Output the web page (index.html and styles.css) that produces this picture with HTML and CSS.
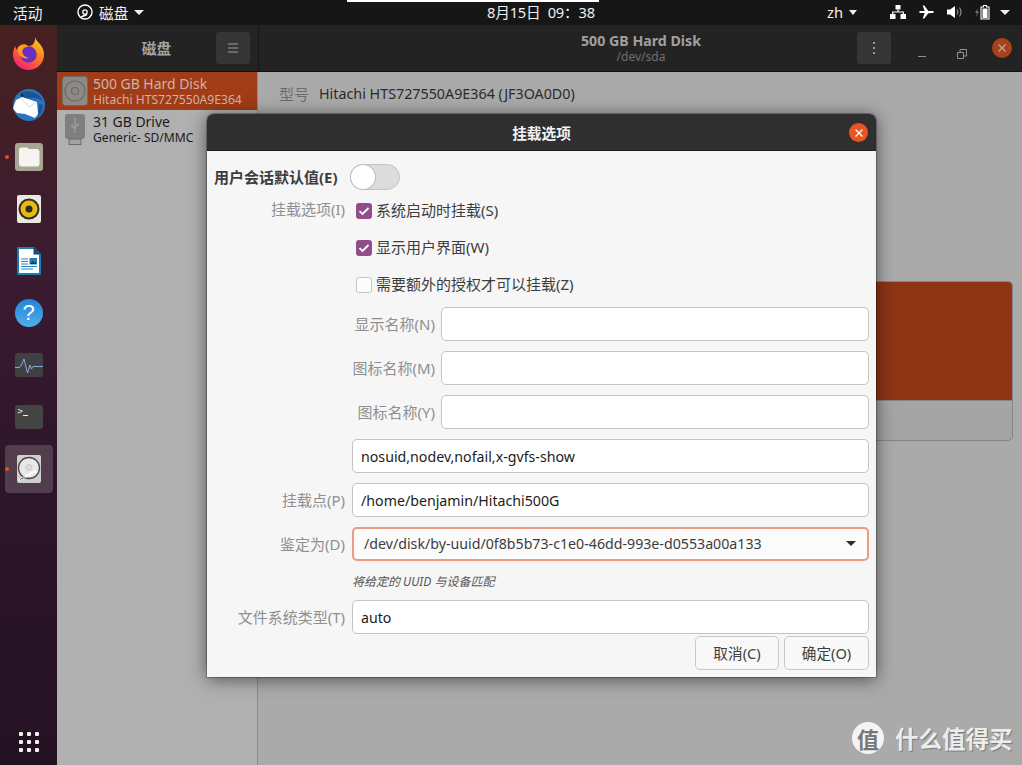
FILE: index.html
```html
<!DOCTYPE html>
<html lang="zh">
<head>
<meta charset="utf-8">
<title>磁盘</title>
<link rel="stylesheet" href="styles.css">
</head>
<body>
<div class="screen">
  <header class="topbar">
    <span class="activities">活动</span>
    <span class="appmenu">
      <svg class="appicon" viewBox="0 0 16 16" width="16" height="16"><circle cx="8" cy="8" r="7" fill="none" stroke="#fff" stroke-width="1.4"/><circle cx="8" cy="8" r="2.2" fill="none" stroke="#fff" stroke-width="1.3"/><path d="M4 13l6-2.5" stroke="#fff" stroke-width="1.4"/></svg>
      <span>磁盘</span>
      <i class="caret"></i>
    </span>
    <span class="clock">8月15日&nbsp;&nbsp;09：38</span>
    <span class="lang">zh<i class="caret small"></i></span>
    <span class="tray">
      <svg viewBox="0 0 16 14" width="16" height="14"><path d="M5.500 0h5v4.500h-5zM0 9h5.500v5H0zM10.500 9H16v5h-5.500z" fill="#fff"/><path d="M8 4.500v2.500M2.700 9V7h10.600v2" fill="none" stroke="#fff" stroke-width="1.200"/></svg>
      <svg viewBox="0 0 16 14" width="15" height="14"><path d="M0 7l1-1.100 5 .1L4 0h1.600L10 5.800l4 .1c1 0 1.800.5 1.800 1.100s-.8 1.100-1.800 1.100l-4 .1L5.600 14H4l2-6-5 .1z" fill="#fff"/></svg>
      <svg viewBox="0 0 15 14" width="15" height="14"><path d="M0 4.500h3L8 1v12L3 9.500H0z" fill="#fff"/><path d="M10 4.500c1 1.500 1 3.500 0 5M12.500 2.500c1.800 2.700 1.800 6.300 0 9" fill="none" stroke="#8d8d8d" stroke-width="1.200"/></svg>
      <svg viewBox="0 0 15 16" width="15" height="16"><path d="M3 4L0 9h2l-1 4 3-5.500H2z" fill="#777"/><path d="M8.500 1.500h3v1.500h2.500v12H6V3h2.500z" fill="none" stroke="#fff" stroke-width="1.100"/><rect x="7.500" y="4.500" width="5" height="9.500" fill="#fff"/></svg>
      <i class="caret"></i>
    </span>
  </header>

  <div class="desktop">
    <nav class="dock">
      <div class="dock-item">
        <svg viewBox="0 0 32 34" width="31" height="33"><defs><linearGradient id="ffa" x1="0.800" y1="0" x2="0.200" y2="1"><stop offset="0" stop-color="#ffd21f"/><stop offset=".45" stop-color="#ff7a1f"/><stop offset="1" stop-color="#f5187c"/></linearGradient></defs><path d="M23 0c.5 3 2 4 4.500 7 3 3.500 4.500 7 4.500 11 0 9-7 16-16 16S0 27 0 18c0-3.500 1-6.500 2.500-9 0 2 .5 3 1.500 4C5 9.500 8 7.500 11 7.500c1.500 0 3 .5 4 1.500 5 1 8-3 8-9z" fill="url(#ffa)"/><circle cx="16" cy="18" r="8.500" fill="#6b2fc0"/><path d="M5 11c3-3 8-3 11-1-4 0-6 2-6.500 5 .5 4 3.500 6.500 7.500 6.500-5 2-11-1-12-6.500z" fill="#ff9a1f"/></svg>
      </div>
      <div class="dock-item">
        <svg viewBox="0 0 32 32" width="32" height="32"><circle cx="16" cy="16" r="16" fill="#2a75c0"/><path d="M7 4c8-4 19-1 23 8-5-3-10-4-14-3-4 1-8 1-9-5z" fill="#1b558f"/><path d="M22 30c5-3 8-8 8-14l-4-1-1 14z" fill="#1a5590"/><path d="M0 19l3-8 6-3 15 5 1 12-3 4-10-4-8-1-3-3z" fill="#fff"/><path d="M8 9l8 9 8-5" fill="none" stroke="#cfd6df" stroke-width="1"/><circle cx="9" cy="6.500" r="1.300" fill="#10243f"/></svg>
      </div>
      <div class="dock-item">
        <i class="run-dot"></i>
        <svg viewBox="0 0 28 28" width="28" height="28"><rect width="28" height="28" rx="3" fill="#a9a595"/><path d="M4 7c0-1.500 1-2.500 2.500-2.500h5c1 0 1.500.5 2.200 1.500h8c1.500 0 2.800 1 2.800 2.500V21c0 1.500-1 2.500-2.500 2.500h-15C5 23.500 4 22.500 4 21z" fill="#f6f4f1"/></svg>
      </div>
      <div class="dock-item">
        <svg viewBox="0 0 24 28" width="24" height="28"><rect width="24" height="28" rx="2" fill="#ebe8dd"/><circle cx="12" cy="14" r="10.500" fill="#2f2d29"/><circle cx="12" cy="14" r="8.500" fill="#eab90f"/><circle cx="12" cy="14" r="3.500" fill="#2b2a25"/></svg>
      </div>
      <div class="dock-item">
        <svg viewBox="0 0 24 28" width="24" height="28"><path d="M1 0h16l7 7v20a1 1 0 0 1-1 1H1a1 1 0 0 1-1-1V1a1 1 0 0 1 1-1z" fill="#1a7fae"/><path d="M2 2h14.500L22 7.500V26H2z" fill="#fff"/><path d="M16.500 0L24 7.500h-7.500z" fill="#0e4f70"/><path d="M4 12h7M4 14.500h7M4 17h7M4 19.500h16M4 22h12" stroke="#1f86c6" stroke-width="1.200"/><rect x="12.500" y="11" width="7.500" height="6.500" fill="#2a7ab0"/><path d="M13 17l2.500-3 2 2 1-1 1 2z" fill="#1c3b56"/></svg>
      </div>
      <div class="dock-item">
        <div class="help">?</div>
      </div>
      <div class="dock-item">
        <svg viewBox="0 0 28 24" width="28" height="24"><rect width="28" height="24" rx="3" fill="#3f4042"/><path d="M0 14.500h4l2-1.500 3-7 3.500 14 2.500-8 1.500 4 1.500-2.500h10" fill="none" stroke="#8fa6e0" stroke-width="1"/></svg>
      </div>
      <div class="dock-item">
        <div class="term"><span>&gt;</span><b></b></div>
      </div>
      <div class="dock-item active">
        <i class="run-dot"></i>
        <svg viewBox="0 0 24 28" width="24" height="28"><rect width="24" height="28" rx="2" fill="#cfcfcf"/><circle cx="12" cy="13" r="10.500" fill="#e8e8e8" stroke="#4a4a4a" stroke-width="1.300"/><circle cx="12" cy="12.500" r="3.500" fill="#d2d2d2"/><circle cx="12" cy="12.500" r="1" fill="#f2f2f2"/><path d="M2 25l17-9" stroke="#fff" stroke-width="2"/><path d="M3 24.500l5-2.500" stroke="#555" stroke-width="1"/></svg>
      </div>
      <div class="apps-grid">
        <i></i><i></i><i></i><i></i><i></i><i></i><i></i><i></i><i></i>
      </div>
    </nav>

    <div class="window">
      <div class="headerbar">
        <div class="hb-side">
          <span class="hb-title">磁盘</span>
          <span class="hb-btn">
            <svg viewBox="0 0 12 10" width="12" height="10"><path d="M1 1h10M1 5h10M1 9h10" stroke="#a0a0a0" stroke-width="1"/></svg>
          </span>
        </div>
        <div class="hb-main">
          <div class="hb-center">
            <div class="hb-heading">500 GB Hard Disk</div>
            <div class="hb-sub">/dev/sda</div>
          </div>
          <span class="hb-btn">
            <svg viewBox="0 0 4 14" width="4" height="14"><path d="M1 1h2v2H1zM1 6h2v2H1zM1 11h2v2H1z" fill="#9a9a9a"/></svg>
          </span>
          <span class="wm-btn min"><svg viewBox="0 0 10 10" width="10" height="10"><path d="M1 7.500h8" stroke="#8e8e8e" stroke-width="1"/></svg></span>
          <span class="wm-btn res"><svg viewBox="0 0 10 10" width="10" height="10"><path d="M.5 3.500h6v6h-6zM3 3V.500h6.500V7H7" fill="none" stroke="#8e8e8e" stroke-width="1"/></svg></span>
          <span class="wm-close"><svg viewBox="0 0 10 10" width="10" height="10"><path d="M1.500 1.500l7 7M8.500 1.500l-7 7" stroke="#b9a69e" stroke-width="1.300"/></svg></span>
        </div>
      </div>
      <div class="content">
        <aside class="sidebar">
          <div class="drive selected">
            <svg class="drive-icon" viewBox="0 0 26 30" width="26" height="30"><rect x=".5" y=".5" width="25" height="29" rx="3" fill="#8f8985" stroke="#6f6a66"/><circle cx="13" cy="15" r="10" fill="none" stroke="#6d6a66" stroke-width="1.200"/><circle cx="13" cy="15" r="3.500" fill="none" stroke="#6d6a66" stroke-width="1.200"/></svg>
            <div class="drive-text">
              <div class="drive-name">500 GB Hard Disk</div>
              <div class="drive-model">Hitachi HTS727550A9E364</div>
            </div>
          </div>
          <div class="drive">
            <svg class="usb-icon" viewBox="0 0 20 31" width="20" height="31"><rect y="0" width="20" height="25" rx="3" fill="#7f7f7f"/><rect x="4" y="25" width="12" height="5.500" fill="#a2a2a2" stroke="#6a6a6a"/><path d="M10 4v15M10 15l-3-2.500V10M10 13l3-2V9" fill="none" stroke="#a0a0a0" stroke-width="1.200"/></svg>
            <div class="drive-text">
              <div class="drive-name">31 GB Drive</div>
              <div class="drive-model">Generic- SD/MMC</div>
            </div>
          </div>
        </aside>
        <main class="main">
          <div class="info"><span class="info-key">型号</span><span class="info-val">Hitachi HTS727550A9E364 (JF3OA0D0)</span></div>
          <div class="volumes">
            <div class="vol-bar"></div>
            <div class="vol-foot"></div>
          </div>
        </main>
      </div>
    </div>
  </div>

  <i class="notify-strip"></i>

  <section class="dialog">
    <div class="dlg-title">
      <span>挂载选项</span>
      <span class="dlg-close"><svg viewBox="0 0 10 10" width="10" height="10"><path d="M1.500 1.500l7 7M8.500 1.500l-7 7" stroke="#fff" stroke-width="1.300"/></svg></span>
    </div>
    <div class="dlg-body">
      <div class="row r-switch">
        <span class="bold-label">用户会话默认值(E)</span>
        <span class="switch"><i></i></span>
      </div>
      <div class="row r-check">
        <span class="lbl">挂载选项(I)</span>
        <span class="chk on"><svg viewBox="0 0 16 16" width="16" height="16"><path d="M3.500 8.200l3 2.800 6-6" fill="none" stroke="#fff" stroke-width="1.800"/></svg></span>
        <span class="chk-text">系统启动时挂载(S)</span>
      </div>
      <div class="row r-check">
        <span class="lbl"></span>
        <span class="chk on"><svg viewBox="0 0 16 16" width="16" height="16"><path d="M3.500 8.200l3 2.800 6-6" fill="none" stroke="#fff" stroke-width="1.800"/></svg></span>
        <span class="chk-text">显示用户界面(W)</span>
      </div>
      <div class="row r-check last">
        <span class="lbl"></span>
        <span class="chk"></span>
        <span class="chk-text">需要额外的授权才可以挂载(Z)</span>
      </div>
      <div class="row r-entry">
        <span class="lbl"></span>
        <span class="lbl-in">显示名称(N)</span>
        <span class="entry"></span>
      </div>
      <div class="row r-entry">
        <span class="lbl"></span>
        <span class="lbl-in">图标名称(M)</span>
        <span class="entry"></span>
      </div>
      <div class="row r-entry">
        <span class="lbl"></span>
        <span class="lbl-in">图标名称(Y)</span>
        <span class="entry"></span>
      </div>
      <div class="row r-entry">
        <span class="lbl"></span>
        <span class="entry">nosuid,nodev,nofail,x-gvfs-show</span>
      </div>
      <div class="row r-entry">
        <span class="lbl">挂载点(P)</span>
        <span class="entry">/home/benjamin/Hitachi500G</span>
      </div>
      <div class="row r-entry r-combo">
        <span class="lbl">鉴定为(D)</span>
        <span class="combo"><span>/dev/disk/by-uuid/0f8b5b73-c1e0-46dd-993e-d0553a00a133</span><i class="caret dark"></i></span>
      </div>
      <div class="row r-hint">
        <span class="lbl"></span>
        <em class="hint">将给定的 UUID 与设备匹配</em>
      </div>
      <div class="row r-entry r-fs">
        <span class="lbl">文件系统类型(T)</span>
        <span class="entry">auto</span>
      </div>
      <div class="dlg-actions">
        <span class="btn narrow">取消(C)</span>
        <span class="btn">确定(O)</span>
      </div>
    </div>
  </section>

  <div class="watermark">
    <span class="wm-logo">值</span>
    <span class="wm-text">什么值得买</span>
  </div>
</div>
</body>
</html>
```

FILE: styles.css
```css
* { box-sizing: border-box; }
html, body { margin: 0; padding: 0; }
body {
  font-family: "Noto Sans", "Noto Sans CJK SC", sans-serif;
  font-size: 15px;
  overflow: hidden;
}
.screen {
  position: relative;
  width: 1022px;
  height: 765px;
  overflow: hidden;
  display: flex;
  flex-direction: column;
  background: #aaa;
}

/* top bar */
.topbar {
  height: 25px;
  flex: none;
  background: #161616;
  color: #f0f0f0;
  display: flex;
  align-items: center;
  font-size: 14.67px;
  padding-bottom: 1px;
  position: relative;
}
.activities { margin-left: 13px; width: 64px; }
.appmenu { display: flex; align-items: center; }
.appicon { margin-right: 6px; }
.caret {
  display: inline-block;
  width: 0;
  height: 0;
  border-left: 5px solid transparent;
  border-right: 5px solid transparent;
  border-top: 5px solid #f0f0f0;
  margin-left: 6px;
}
.caret.small { margin-left: 6px; border-left-width: 4px; border-right-width: 4px; }
.caret.dark { border-top-color: #2e2e2e; margin-left: 0; }
.clock { position: absolute; left: 487px; top: 1px; letter-spacing: -0.2px; }
.lang { margin-left: auto; display: flex; align-items: center; }
.tray { margin-left: 33px; margin-right: 12px; display: flex; align-items: center; gap: 13px; }
.tray .caret { margin-left: -3px; }
.notify-strip {
  position: absolute;
  left: 347px;
  top: 0;
  width: 252px;
  height: 1.500px;
  background: #fff;
}

.desktop { flex: 1; display: flex; min-height: 0; }

/* dock */
.dock {
  width: 57px;
  flex: none;
  display: flex;
  flex-direction: column;
  align-items: center;
  padding: 2px 0 13px 0;
  background: linear-gradient(180deg, #47201f 0%, #3c1c30 30%, #2c1529 65%, #241223 100%);
}
.dock-item {
  position: relative;
  width: 48px;
  height: 52px;
  flex: none;
  display: flex;
  align-items: center;
  justify-content: center;
}
.dock-item.active::before {
  content: "";
  position: absolute;
  left: 0;
  right: 0;
  top: 2px;
  bottom: 2px;
  border-radius: 4px;
  background: rgba(255, 255, 255, 0.17);
}
.dock-item svg { position: relative; }
.run-dot {
  position: absolute;
  left: 0;
  top: 24px;
  width: 4px;
  height: 4px;
  border-radius: 50%;
  background: #e9501f;
  z-index: 1;
}
.help {
  width: 28px;
  height: 28px;
  border-radius: 50%;
  background: linear-gradient(180deg, #2383d8, #52aeea);
  color: #fff;
  text-align: center;
  font: 22px/28px "Liberation Sans", sans-serif;
}
.term {
  width: 28px;
  height: 24px;
  border-radius: 3px;
  background: #444;
  color: #e8e8e8;
  display: flex;
  align-items: flex-start;
  padding: 1px 0 0 3px;
  font: 9px/11px "DejaVu Sans Mono", monospace;
}
.term b { display: block; width: 5px; height: 1px; background: #eee; margin-top: 9px; }
.apps-grid {
  margin-top: auto;
  display: grid;
  grid-template-columns: repeat(3, 4px);
  gap: 4px;
}
.apps-grid i { display: block; width: 4px; height: 4px; background: #f2f2f2; border-radius: 1px; }

/* window */
.window { flex: 1; display: flex; flex-direction: column; min-width: 0; }
.headerbar {
  height: 47px;
  flex: none;
  display: flex;
  background: #232323;
  border-bottom: 1px solid #111;
}
.hb-side {
  width: 202px;
  flex: none;
  display: flex;
  align-items: center;
  border-right: 1px solid #161616;
  padding-right: 8px;
}
.hb-title { flex: 1; text-align: center; font-weight: 700; color: #a3a3a3; font-size: 14.67px; padding: 0 0 2px 40px; }
.hb-btn {
  width: 34px;
  height: 32px;
  background: #353535;
  border-radius: 3px;
  display: flex;
  align-items: center;
  justify-content: center;
  flex: none;
}
.hb-main { flex: 1; display: flex; align-items: center; min-width: 0; }
.hb-center { width: 598px; padding-left: 166px; text-align: center; flex: none; }
.hb-heading { font-weight: 700; color: #a0a0a0; font-size: 14.2px; line-height: 17px; }
.hb-sub { color: #6f6f6f; font-size: 12px; line-height: 15px; }
.wm-btn { width: 10px; height: 10px; display: block; flex: none; }
.min { margin-left: 26px; }
.res { margin-left: 30px; }
.wm-close {
  margin-left: 25px;
  width: 20px;
  height: 20px;
  border-radius: 50%;
  background: #a8421c;
  display: flex;
  align-items: center;
  justify-content: center;
  flex: none;
}

.content { flex: 1; display: flex; min-height: 0; }
.sidebar {
  width: 201px;
  flex: none;
  background: #b0b0b0;
  border-right: 1px solid #8c8c8c;
}
.drive { height: 38px; display: flex; align-items: center; padding-left: 8px; color: #1a1a1a; }
.drive.selected { background: #a03c17; color: #d2b2a5; height: 38px; padding-left: 5px; }
.drive-icon { flex: none; margin-right: 5px; }
.usb-icon { flex: none; margin-right: 8px; }
.drive-text { white-space: nowrap; }
.drive-name { font-size: 13.95px; line-height: 17px; }
.drive-model { font-size: 12.1px; line-height: 15px; }

.main {
  flex: 1;
  min-width: 0;
  background: #aaaaaa;
  padding: 11px 9px 0 21px;
}
.info { display: flex; line-height: 22px; white-space: nowrap; }
.info-key { color: #6c6c6c; margin-right: 10px; }
.info-val { color: #2a2a2a; font-size: 14.3px; }
.volumes {
  margin-top: 176px;
  height: 160px;
  border: 1px solid #858585;
  border-radius: 5px;
  overflow: hidden;
  display: flex;
  flex-direction: column;
  background: linear-gradient(180deg, #ababab, #a3a3a3);
}
.vol-bar { height: 119px; background: #8d3515; border-bottom: 1px solid #868686; }
.vol-foot { flex: 1; }

/* dialog */
.dialog {
  position: absolute;
  left: 207px;
  top: 114px;
  width: 669px;
  height: 563px;
  background: #f6f6f6;
  border-radius: 6px 6px 0 0;
  box-shadow: 0 2px 18px rgba(0, 0, 0, 0.55), 0 0 0 1px rgba(0, 0, 0, 0.25);
  display: flex;
  flex-direction: column;
}
.dlg-title {
  height: 37px;
  flex: none;
  background: #302f2f;
  border-bottom: 1px solid #1e1e1e;
  border-radius: 6px 6px 0 0;
  color: #f2f2f2;
  font-weight: 700;
  font-size: 14.67px;
  display: flex;
  align-items: center;
  justify-content: center;
  position: relative;
}
.dlg-close {
  position: absolute;
  right: 8px;
  top: 9px;
  width: 19px;
  height: 19px;
  border-radius: 50%;
  background: #e95420;
  display: flex;
  align-items: center;
  justify-content: center;
}
.dlg-body { flex: 1; padding: 13px 7px 0 7px; }
.row { display: flex; align-items: center; white-space: nowrap; }
.lbl { width: 131px; margin-right: 7px; padding-bottom: 2px; text-align: right; color: #8f8f8f; flex: none; }
.r-check .lbl { padding-bottom: 4px; }
.lbl-in { width: 83px; margin-right: 6px; padding-bottom: 2px; text-align: right; color: #8f8f8f; flex: none; }
.r-switch { height: 26px; margin-bottom: 7px; }
.bold-label { width: 136px; padding-bottom: 2px; font-weight: 700; color: #3d3d3d; flex: none; }
.switch {
  display: block;
  width: 50px;
  height: 26px;
  border-radius: 13px;
  background: #dcdcdc;
  border: 1px solid #c3c3c3;
}
.switch i {
  display: block;
  width: 24px;
  height: 24px;
  border-radius: 50%;
  background: #fff;
  box-shadow: 0 0 0 1px #bdbdbd;
}
.r-check { height: 27px; margin-bottom: 10px; }
.r-check.last { margin-bottom: 9px; }
.chk {
  width: 16px;
  height: 16px;
  margin-left: 4px;
  margin-right: 4px;
  border-radius: 3px;
  background: #fcfcfc;
  border: 1px solid #c6c6c6;
  flex: none;
  display: block;
}
.chk.on { background: #924d8b; border: none; }
.chk svg { display: block; }
.chk-text { color: #3d3d3d; padding-bottom: 2px; }
.r-entry { height: 34px; margin-bottom: 10px; }
.entry {
  flex: 1;
  height: 34px;
  background: #fff;
  border: 1px solid #c4c4c4;
  border-radius: 5px;
  padding-left: 8px;
  line-height: 33px;
  font-size: 14.2px;
  color: #1c1c1c;
}
.r-combo { margin-bottom: 0; }
.combo {
  flex: 1;
  height: 34px;
  display: flex;
  align-items: center;
  justify-content: space-between;
  background: #fbfbfb;
  border: 2px solid #ee9a80;
  border-radius: 5px;
  padding: 0 11px 1px 10px;
  font-size: 14.2px;
  color: #3d3d3d;
}
.r-hint { height: 39px; }
.hint { font-size: 12px; color: #555; font-style: italic; }
.r-fs { margin-bottom: 2px; }
.dlg-actions { display: flex; justify-content: flex-end; gap: 5px; }
.btn {
  width: 85px;
  height: 34px;
  border: 1px solid #c9c9c9;
  border-radius: 5px;
  background: #f8f8f8;
  color: #3d3d3d;
  text-align: center;
  line-height: 32px;
  font-size: 14.67px;
}
.btn.narrow { width: 84px; }

/* watermark */
.watermark {
  position: absolute;
  left: 852px;
  top: 722px;
  display: flex;
  align-items: center;
  gap: 11px;
}
.wm-logo {
  width: 32px;
  height: 32px;
  border-radius: 50%;
  background: #f4f4f4;
  color: #777;
  text-align: center;
  font: 700 22px/32px "Noto Sans CJK SC", sans-serif;
}
.wm-text {
  color: #ececec;
  font: 700 23.500px/32px "Noto Sans CJK SC", sans-serif;
  text-shadow: 1px 1px 1px rgba(0, 0, 0, 0.3);
}
```
